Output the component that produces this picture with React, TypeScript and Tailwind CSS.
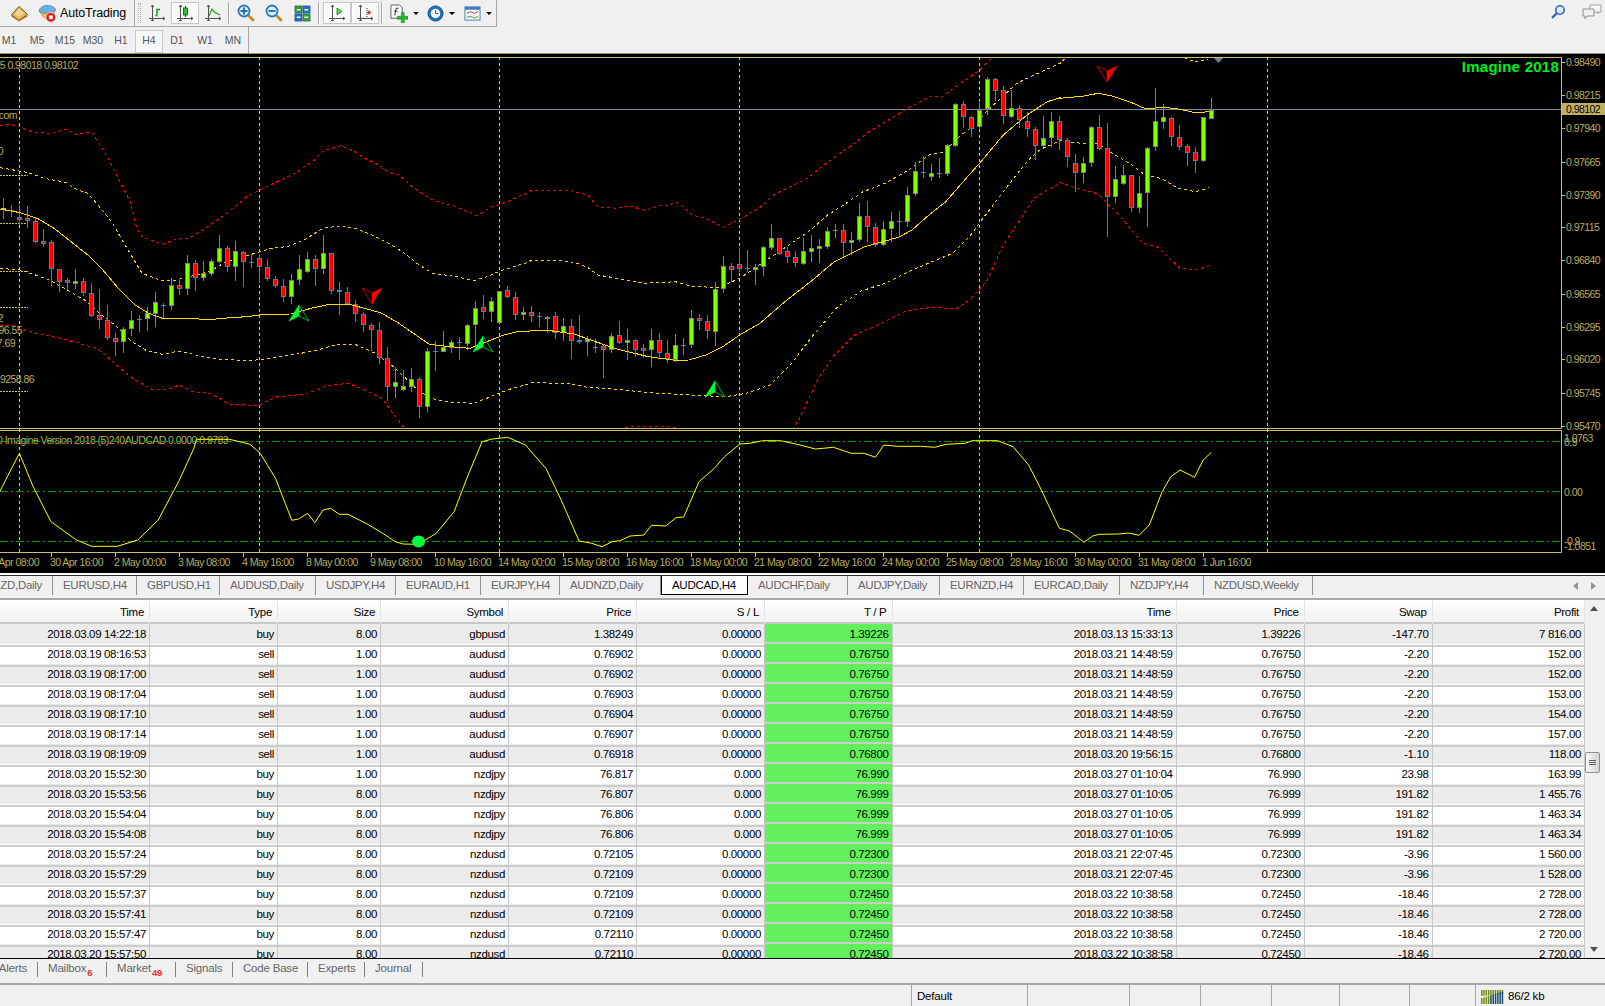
const SANS = "font-['Liberation_Sans',Arial,sans-serif]";

// [high, body top, body bottom, low, 1 = bull / 0 = bear / 2 = plain line]
// numbers are y read off the chart at 3x, first array from x 0, last array has another y origin
const BARS: number[][] = [
  [430,460,464,492,2],[450,464,468,487,0],[450,487,494,510,0],[453,490,499,520,0],[490,499,560,563,0],
  [522,559,566,575,0],[556,562,643,692,0],[643,643,680,710,0],[670,674,685,705,0],[643,679,686,702,1],
  [670,679,715,722,0],[685,715,782,785,0],[702,781,796,822,0],[750,796,848,855,0],[835,848,862,902,0],
  [815,823,862,893,1],[768,796,823,843,1],[780,793,795,830,1],[757,775,793,827,1],[712,742,776,815,1],
  [745,750,754,790,0],[670,691,754,765,1],[672,691,703,720,0],[601,625,703,720,1],[615,625,670,708,0],
  [618,655,670,677,1],[613,619,658,662,1],[541,580,620,625,1],[573,580,637,650,0],[558,589,637,678,1],
  [587,590,622,695,0],[597,621,624,638,0],[597,610,635,683,0],[612,637,673,678,0],[663,673,692,698,0],
  [672,692,725,740,0],[657,676,725,746,1],[601,643,676,690,1],[591,613,650,655,1],[600,613,643,692,0],
  [541,595,643,656,1],[595,595,707,716,0],[682,706,712,780,0],[697,712,746,750,0],[736,748,778,800,0],
  [772,778,811,830,0],[804,811,826,888,0],[802,826,910,926,0],[877,910,997,1038,0],[937,980,997,1028,1],
  [945,994,1006,1008,1],[939,973,995,1010,1],[965,973,1055,1090,0],[880,889,1055,1070,1],[858,888,892,948,0],
  [828,875,892,890,1],[855,862,880,893,1],[845,862,865,915,0],[808,811,866,885,1],[738,760,811,875,1],
  [720,757,772,792,0],[727,737,772,800,1],[707,707,805,805,1],[693,706,725,730,0],[712,725,781,795,0],
  [755,772,781,795,1],[753,772,784,800,0],[770,784,786,815,0],[783,787,791,833,1],[770,784,835,851,0],
  [790,814,835,857,1],[793,814,859,911,0],[780,856,862,868,0],[843,852,862,902,1],[853,875,880,893,1],
  [870,873,886,968,0],[835,842,886,893,1],[798,841,865,868,0],[822,854,865,915,1],[853,856,886,905,0],
  [867,880,889,910,0],[823,856,886,935,1],[835,856,895,913,0],[855,895,912,923,0],[838,871,915,920,1],
  [850,871,874,900,0],[765,790,869,880,1],[777,790,799,825,0],[780,799,829,851,0],[682,703,830,872,1],
  [603,634,703,715,1],[625,634,646,682,0],[580,628,641,652,0],[585,640,643,652,0],[628,637,646,690,1],
  [572,577,637,662,1],[507,550,578,585,1],[550,550,598,600,0],[576,589,607,624,0],[588,607,625,635,0],
  [549,589,626,630,1],[541,580,590,622,1],[553,574,581,624,1],[515,529,576,582,1],[507,525,527,549,1],
  [507,526,563,610,0],[530,556,563,600,1],[445,484,556,560,1],[438,484,517,560,0],[505,515,569,575,0],
  [498,523,569,572,1],[472,499,523,560,1],[468,498,500,545,1],[396,421,500,515,1],[322,349,418,422,1],
  [303,350,353,368,0],[327,355,365,377,1],[310,354,356,368,1],[268,271,357,363,1],[145,148,272,276,1],
  [138,148,187,218,0],[182,187,223,245,0],[145,164,215,225,1],[67,72,163,180,1],[70,72,109,137,0],
  [93,106,184,207,0],[105,160,185,190,1],[150,160,196,218,0],[170,199,223,245,0],[215,223,272,315,0],
  [183,248,272,277,1],[172,199,248,277,1],[183,199,255,285,0],
];
const BARS_TOP: number[][] = [
  [415,420,470,500,0],[462,490,520,575,0],[470,490,520,548,1],[378,380,490,500,1],[345,380,447,450,0],
  [370,445,590,710,0],[498,538,590,608,1],[495,526,553,555,1],[525,526,625,635,0],[528,580,625,638,1],
  [442,444,580,680,1],[265,364,442,452,1],[312,351,365,387,1],[352,355,412,438,0],[375,412,440,450,0],
  [433,439,458,497,0],[441,457,482,518,0],[350,352,484,485,1],[294,330,356,358,1],
];

const L = (z: number[]) => z.reduce<string[]>((a, v, i) => (i % 2 ? a : [...a, `${(v / 2.958).toFixed(1)},${(55 + z[i + 1] / 3).toFixed(1)}`]), []);
const M = (z: number[]) => z.reduce<string[]>((a, v, i) => (i % 2 ? a : [...a, `${(530 + v / 2.958).toFixed(1)},${(55 + z[i + 1] / 3).toFixed(1)}`]), []);
const R = (z: number[]) => z.reduce<string[]>((a, v, i) => (i % 2 ? a : [...a, `${(1060 + v / 2.877).toFixed(1)},${(z[i + 1] / 3).toFixed(1)}`]), []);

const red1 = [...L([0,212,30,208,60,216,100,232,155,235,195,222,225,238,270,230,290,260,320,310,350,370,385,440,405,520,420,545,480,568,520,553,560,550,600,525,650,490,690,460,730,425,770,405,830,375,880,350,930,315,955,288,1010,272,1050,290,1080,310,1110,325,1150,352,1180,360,1220,395,1270,430,1300,442,1350,455,1410,482,1450,458,1500,440,1568,410]),
  ...M([0,407,125,408,170,420,200,455,260,460,290,452,340,466,380,452,410,452,430,440,460,460,480,480,520,490,572,517,620,492,680,458,720,420,770,395,820,370,870,330,910,300,960,265,1000,232,1060,195,1110,165,1120,158,1190,122,1215,128,1260,95,1330,45,1365,10,1400,-20])];
const yel1 = [...L([0,338,40,345,85,353,130,370,195,382,225,403,260,415,290,450,330,500,370,570,400,620,420,655,480,678,520,675,560,665,620,650,660,625,720,605,770,590,810,578,850,575,900,555,955,520,1010,512,1050,520,1100,540,1150,565,1190,590,1240,630,1280,655,1350,665,1400,677,1440,665,1480,648,1520,635,1568,620]),
  ...M([0,617,90,617,150,628,175,640,200,660,270,672,340,685,430,680,480,695,560,697,620,670,700,615,780,560,830,525,880,480,920,455,985,410,1050,385,1120,345,1180,300,1225,290,1270,245,1320,205,1350,170,1440,85,1470,70,1568,25]),
  ...R([0,185,20,175,50,155,330,155,365,178,395,185,425,178])];
const mid = [...L([0,462,60,473,110,490,160,520,210,560,260,600,300,640,350,700,400,750,440,775,480,790,560,790,600,793,630,793,680,788,730,785,780,778,860,777,920,760,975,748,1040,750,1090,763,1130,775,1180,805,1230,840,1270,868,1330,875,1390,880,1440,860,1490,840,1530,830,1568,828]),
  ...M([0,828,60,827,130,837,180,855,250,880,350,905,430,916,470,915,520,900,570,875,620,840,680,805,760,735,830,680,900,620,990,575,1090,547,1130,525,1180,480,1230,440,1290,370,1330,325,1400,240,1470,180,1530,140,1568,128]),
  ...R([0,295,70,288,110,280,150,288,200,305,245,326,300,322,340,327,390,338,430,335])];
const yel2 = [...L([0,640,60,645,90,655,140,672,190,700,250,735,300,780,340,810,390,860,430,885,480,898,530,888,600,905,650,913,740,917,800,910,880,897,940,885,1000,868,1050,868,1110,895,1170,940,1240,1010,1290,1035,1340,1042,1400,1045,1440,1030,1500,1005,1568,985]),
  ...M([0,983,110,985,170,997,260,1003,340,1012,470,1020,580,1025,640,1015,710,990,770,930,830,850,910,755,980,708,1050,685,1130,645,1250,595,1300,545,1340,490,1400,410,1450,345,1480,310,1510,283,1568,258]),
  ...R([0,422,60,430,110,432,150,460,200,490,245,525,290,535,340,565,390,575,430,563])];
const red2a = L([0,810,40,812,80,828,130,840,180,850,240,867,290,882,350,935,400,975,450,1003,490,1005,530,990,570,1010,620,1015,680,1047,760,1052,820,1025,900,1018,970,992,1030,985,1080,1005,1130,1030,1200,1125]);
const red2b = M([280,1117,370,1113,440,1117]);
const red2c = [...M([775,1125,800,1085,850,975,900,900,960,840,1040,805,1115,767,1190,757,1260,762,1300,735,1350,680,1400,570,1440,510,1490,430,1530,405,1568,385]),
  ...R([0,548,50,565,110,582,135,610,175,650,220,710,240,730,280,740,330,790,345,805,395,810,430,796])];

const P5 = (z: number[]) => z.reduce<string[]>((a, v, i) => (i % 2 ? a : [...a, `${(v / 1.96).toFixed(1)},${(425 + z[i + 1] / 3).toFixed(1)}`]), []);
const P6 = (z: number[]) => z.reduce<string[]>((a, v, i) => (i % 2 ? a : [...a, `${(800 + v / 1.947).toFixed(1)},${(425 + z[i + 1] / 3).toFixed(1)}`]), []);
const osc = [...P5([0,198,38,85,65,185,100,290,150,345,180,364,230,364,270,345,310,285,350,170,380,70,385,43,450,43,490,58,510,85,540,160,572,286,585,282,603,265,617,293,633,255,648,250,665,268,682,268,720,297,750,325,775,350,790,357,820,358,855,325,890,260,915,160,945,50,965,42,995,37,1030,60,1070,130,1100,225,1135,348,1160,355,1180,365,1200,350,1215,347,1235,333,1262,330,1277,301,1305,303,1325,278,1340,276,1370,170,1385,150,1400,130,1420,95,1450,57,1470,55,1495,47,1530,47,1568,60]),
  ...P6([30,72,65,67,100,85,125,85,147,97,163,60,190,64,235,64,262,67,285,58,322,55,335,47,385,47,415,65,445,120,470,195,505,310,525,318,553,352,570,333,582,328,620,327,640,324,660,331,680,300,705,200,722,155,740,135,768,157,785,105,801,82])];

const PRICES: [string, number][] = [["0.98490",62],["0.98215",95],["0.97940",128],["0.97665",162],["0.97390",195],["0.97115",227],["0.96840",260],["0.96565",294],["0.96295",327],["0.96020",359],["0.95745",393],["0.95470",426]];
const TIMES = ["27 Apr 08:00","30 Apr 16:00","2 May 00:00","3 May 08:00","4 May 16:00","8 May 00:00","9 May 08:00","10 May 16:00","14 May 00:00","15 May 08:00","16 May 16:00","18 May 00:00","21 May 08:00","22 May 16:00","24 May 00:00","25 May 08:00","28 May 16:00","30 May 00:00","31 May 08:00","1 Jun 16:00"];
const GRID = [19, 259, 499, 739, 979, 1267];

function Candle({ k, bar, base }: { k: number; bar: number[]; base: number }) {
  const x = 3 + 8 * k;
  const [hi, top, bot, lo, kind] = bar.map((v, i) => (i < 4 ? Math.round((v + base) / 3) + 55 : v));
  const edge = kind === 2 ? "#00c000" : kind === 1 ? "#808080" : "#4682b4";
  const fill = kind === 1 ? "#7fff00" : "#ff0000";
  const h = Math.max(1, bot - top);
  return (
    <g>
      <rect x={x} y={hi} width={1} height={lo - hi} fill={edge} />
      <rect x={x - 2} y={top} width={5} height={h} fill={kind === 2 ? "#c8c070" : edge} />
      {h > 2 && <rect x={x - 1} y={top + 1} width={3} height={h - 2} fill={fill} />}
    </g>
  );
}

function UpArrow({ x, y }: { x: number; y: number }) {
  return (
    <g>
      <polygon points={`${x},${y} ${x - 10},${y + 16} ${x},${y + 11}`} fill="#00ff33" stroke="#00ff33" strokeWidth={0.6} />
      <polyline points={`${x},${y} ${x + 10},${y + 16} ${x},${y + 11}`} fill="none" stroke="#00b020" strokeWidth={1} />
    </g>
  );
}

function DownArrow({ x, y }: { x: number; y: number }) {
  return (
    <g>
      <polygon points={`${x},${y} ${x + 10},${y - 16} ${x},${y - 11}`} fill="#ff0000" stroke="#ff0000" strokeWidth={0.6} />
      <polyline points={`${x},${y} ${x - 10},${y - 16} ${x},${y - 11}`} fill="none" stroke="#c00000" strokeWidth={1} />
    </g>
  );
}

function Chart() {
  const gold = "#b8ad62";
  const frame = "#c8c070";
  return (
    <svg viewBox="0 54 1605 519" className={`block h-[519px] w-[1605px] bg-black ${SANS}`}>
      <defs>
        <clipPath id="main"><rect x="0" y="58" width="1561" height="370" /></clipPath>
      </defs>
      {GRID.map((x) => (
        <line key={x} x1={x + 0.5} x2={x + 0.5} y1="57" y2="552" stroke="#d8d080" strokeDasharray="3 3" />
      ))}
      <line x1="0" x2="1561" y1="109.5" y2="109.5" stroke="#7f8c9a" />
      <g clipPath="url(#main)" shapeRendering="crispEdges">
        {[175.5, 223.5, 271.5, 307.5, 391.5].map((y) => (
          <line key={y} x1="0" x2="28" y1={y} y2={y} stroke={frame} strokeDasharray="2 1" />
        ))}
        <polyline points={red1.join(" ")} fill="none" stroke="#ff0000" strokeDasharray="3 3" />
        <polyline points={yel1.join(" ")} fill="none" stroke="#ffd700" strokeDasharray="3 3" />
        <polyline points={yel2.join(" ")} fill="none" stroke="#ffd700" strokeDasharray="3 3" />
        <polyline points={red2a.join(" ")} fill="none" stroke="#ff0000" strokeDasharray="3 3" />
        <polyline points={red2b.join(" ")} fill="none" stroke="#ff0000" strokeDasharray="3 3" />
        <polyline points={red2c.join(" ")} fill="none" stroke="#ff0000" strokeDasharray="3 3" />
        {BARS.map((b, i) => <Candle key={i} k={i} bar={b} base={0} />)}
        {BARS_TOP.map((b, i) => <Candle key={i} k={133 + i} bar={b} base={-165} />)}
        <polyline points={mid.join(" ")} fill="none" stroke="#ffd700" />
      </g>
      <UpArrow x={299} y={305} />
      <UpArrow x={483} y={336} />
      <UpArrow x={715} y={381} />
      <DownArrow x={372} y={304} />
      <DownArrow x={1107} y={82} />
      <polygon points="1214,58 1223,58 1218.5,63" fill="#708090" />

      {/* main window frame */}
      <path d="M0 57.5H1561.5V428.5H0M0 430.5H1561.5V552.5H0M1561.5 430.5V552.5" fill="none" stroke={frame} />

      {/* left edge leftovers of other indicators */}
      <g fontSize="10.5" letterSpacing="-0.55" fill={gold}>
        <text x="78" y="69" textAnchor="end">95 0.98018 0.98102</text>
        <text x="17" y="119" textAnchor="end">.com</text>
        <text x="3" y="155" textAnchor="end">0</text>
        <text x="3" y="322" textAnchor="end">2</text>
        <text x="22" y="334" textAnchor="end">96.55</text>
        <text x="15" y="347" textAnchor="end">7.69</text>
        <text x="34" y="383" textAnchor="end">9258.86</text>
        <text x="-3" y="444">0 Imagine Version 2018 (5)240AUDCAD 0.0000 0.9783</text>
      </g>
      <text x="1559" y="72" textAnchor="end" fontSize="15" fontWeight="700" letterSpacing="0.25" fill="#00ee22">Imagine 2018</text>

      {/* price axis */}
      <g fontSize="10.5" letterSpacing="-0.55" fill={gold}>
        {PRICES.map(([t, y]) => (
          <g key={t}>
            <line x1="1561" x2="1565" y1={y + 0.5} y2={y + 0.5} stroke={frame} />
            <text x="1566" y={y + 4}>{t}</text>
          </g>
        ))}
      </g>
      <rect x="1562" y="103" width="43" height="12" fill="#c0b060" />
      <text x="1566" y="113" fontSize="10.5" letterSpacing="-0.55" fill="#000">0.98102</text>

      {/* oscillator */}
      {[441.5, 491.5, 541.5].map((y) => (
        <line key={y} x1="0" x2="1561" y1={y} y2={y} stroke="#00a000" strokeDasharray="8 3 2 3" />
      ))}
      <polyline points={osc.join(" ")} fill="none" stroke="#ffff00" />
      <ellipse cx="418.5" cy="541.5" rx="6.5" ry="6" fill="#00ff40" />
      <g fontSize="10.5" letterSpacing="-0.55" fill={gold}>
        <text x="1564" y="442">1.0763</text>
        <text x="1564" y="446">0.9</text>
        <text x="1564" y="496">0.00</text>
        <text x="1564" y="545">-0.9</text>
        <text x="1564" y="550">-1.0851</text>
      </g>

      {/* time axis */}
      <g fontSize="10.5" letterSpacing="-0.55" fill={gold}>
        {TIMES.map((t, i) => (
          <g key={t}>
            <line x1={-13 + 64 * i + 0.5} x2={-13 + 64 * i + 0.5} y1="552" y2="557" stroke={frame} />
            <text x={-14 + 64 * i} y="565.5">{t}</text>
          </g>
        ))}
      </g>
    </svg>
  );
}

function Axes({ children }: { children?: React.ReactNode }) {
  return (
    <svg viewBox="0 0 18 18" className="h-[18px] w-[18px]">
      <path d="M4.5 1V17M1 14.5H17M3 3L4.5 1L6 3M15 13L17 14.5L15 16M3 16.5H6" fill="none" stroke="#505050" />
      {children}
    </svg>
  );
}

function ToolBtn({ children, active }: { children: React.ReactNode; active?: boolean }) {
  return (
    <div className={`flex h-[22px] w-[28px] items-center justify-center ${active ? "border border-[#c8c8c8] bg-[#f8f8f8] [box-shadow:inset_1px_1px_0_#fff]" : ""}`}>
      {children}
    </div>
  );
}

const Sep = ({ gap }: { gap: string }) => <div className={`h-[22px] w-[2px] shrink-0 border-l border-[#a8a8a8] bg-white/70 ${gap}`} />;
const Caret = () => <div className="ml-[1px] h-0 w-0 border-x-[3px] border-t-[3px] border-x-transparent border-t-black" />;

function Magnifier({ minus }: { minus?: boolean }) {
  return (
    <svg viewBox="0 0 18 18" className="h-[18px] w-[18px]">
      <path d="M10.5 10.5L16 16" stroke="#c09030" strokeWidth="3" strokeLinecap="round" />
      <circle cx="7" cy="7" r="5.5" fill="#d8eefa" stroke="#2a78c0" strokeWidth="1.8" />
      <path d={minus ? "M3.5 7H10.5" : "M3.5 7H10.5M7 3.5V10.5"} stroke="#1a6ab0" strokeWidth="1.8" />
    </svg>
  );
}

function Toolbars() {
  const tfs = ["M1", "M5", "M15", "M30", "H1", "H4", "D1", "W1", "MN"];
  return (
    <div className={`relative h-[54px] w-full shrink-0 border-b border-[#909090] bg-[#f0f0f0] ${SANS}`}>
      <div className="flex h-[27px] w-[497px] items-center border-r border-b border-[#a8a8a8]">
        <div className="flex h-full w-[135px] items-center border-r border-[#a8a8a8] pl-[11px]">
          <svg viewBox="0 0 17 17" className="h-[17px] w-[17px]">
            <path d="M8 1.5L0.5 10L8 15.5L16.5 9.5Z" fill="#e8b858" stroke="#6e4c14" />
            <path d="M8 3.5L3.5 9L8 12L13 8.5Z" fill="#f4d48e" />
            <path d="M0.5 10L8 15.5L16.5 9.5V11.5L8 16.5L0.5 11.5Z" fill="#a87424" />
          </svg>
          <svg viewBox="0 0 20 20" className="ml-[10px] h-[19px] w-[19px]">
            <path d="M2 8C4 13 8 17 12 17L17 10L18 6Z" fill="#f0c040" stroke="#b08020" strokeWidth="0.5" />
            <path d="M1 8C1 4 6 1 11 1.5C16 2 19 4.5 18.5 7C15 10 5 11 1 8Z" fill="#6cb0e0" stroke="#3a78a8" strokeWidth="0.6" />
            <circle cx="13.5" cy="14" r="5.2" fill="#e01818" stroke="#fff" strokeWidth="0.8" />
            <rect x="11.5" y="12" width="4" height="4" fill="#fff" />
          </svg>
          <span className="ml-[3px] text-[12.5px] tracking-[-0.15px] text-black">AutoTrading</span>
        </div>
        <div className="ml-[3px] h-[20px] w-[3px] border-x border-dotted border-[#b0b0b0]" />
        <div className="ml-[2px] flex items-center">
          <ToolBtn>
            <Axes><path d="M9 11.5V5.5H12M7.5 11.5H9" fill="none" stroke="#00a000" strokeWidth="1.4" /></Axes>
          </ToolBtn>
          <ToolBtn active>
            <Axes>
              <path d="M9.5 2V13" stroke="#404040" />
              <rect x="7.5" y="4" width="4" height="7" fill="#30c030" stroke="#006000" strokeWidth="0.8" />
            </Axes>
          </ToolBtn>
          <ToolBtn>
            <Axes><path d="M5 12L8 5L11 8.5L16 11" fill="none" stroke="#20a020" strokeWidth="1.2" /></Axes>
          </ToolBtn>
        </div>
        <Sep gap="ml-[1px] mr-[2px]" />
        <div className="flex items-center">
          <ToolBtn><Magnifier /></ToolBtn>
          <ToolBtn><Magnifier minus /></ToolBtn>
          <ToolBtn>
            <svg viewBox="0 0 18 18" className="h-[17px] w-[17px]">
              <rect x="1" y="1" width="7.5" height="7.5" fill="#30a040" stroke="#106020" strokeWidth="0.6" />
              <rect x="9.5" y="1" width="7.5" height="7.5" fill="#2a70d0" stroke="#103a80" strokeWidth="0.6" />
              <rect x="1" y="9.5" width="7.5" height="7.5" fill="#2a70d0" stroke="#103a80" strokeWidth="0.6" />
              <rect x="9.5" y="9.5" width="7.5" height="7.5" fill="#30a040" stroke="#106020" strokeWidth="0.6" />
              <path d="M3 5H7M11 5H15M3 13H7M11 13H15" stroke="#fff" strokeWidth="1.6" />
            </svg>
          </ToolBtn>
        </div>
        <Sep gap="ml-[2px] mr-[3px]" />
        <div className="flex items-center">
          <ToolBtn active><Axes><path d="M9 4V11L14 7.5Z" fill="#60d060" stroke="#108010" strokeWidth="0.8" /></Axes></ToolBtn>
          <ToolBtn active><Axes><path d="M11 4V13" stroke="#303090" strokeDasharray="1 1" /><path d="M11 8.5H15M13 6.5V10.5" stroke="#d02020" strokeWidth="1.3" /></Axes></ToolBtn>
        </div>
        <Sep gap="ml-[2px] mr-[1px]" />
        <div className="flex items-center">
          <div className="flex w-[28px] items-center justify-center">
            <svg viewBox="0 0 20 20" className="h-[19px] w-[19px]">
              <path d="M2 1H11L14 4V15H2Z" fill="#f8f8f8" stroke="#606060" />
              <path d="M6 12L7.5 4.5H10M5.5 7.5H9" fill="none" stroke="#303030" />
              <path d="M13 9V13H9V16H13V20H16V16H20V13H16V9Z" fill="#20c030" stroke="#108018" strokeWidth="0.6" />
            </svg>
          </div>
          <Caret />
          <div className="ml-[3px] flex w-[26px] items-center justify-center">
            <svg viewBox="0 0 18 18" className="h-[17px] w-[17px]">
              <circle cx="9" cy="9" r="8" fill="#1f70c0" stroke="#0e4a88" />
              <circle cx="9" cy="9" r="5" fill="#f4f8fc" />
              <path d="M9 5.5V9H12" fill="none" stroke="#404040" />
            </svg>
          </div>
          <Caret />
          <div className="ml-[4px] flex w-[26px] items-center justify-center">
            <svg viewBox="0 0 18 18" className="h-[17px] w-[17px]">
              <rect x="1" y="2" width="16" height="14" fill="#f4f4f4" stroke="#5080b0" />
              <rect x="1" y="2" width="16" height="3" fill="#3a80c8" />
              <path d="M3 9L7 7L11 9L15 7" fill="none" stroke="#c04020" />
              <path d="M3 13L7 12L11 14L15 12" fill="none" stroke="#30a030" />
            </svg>
          </div>
          <Caret />
        </div>
      </div>
      <div className="flex h-[26px] w-[249px] items-center overflow-hidden border-r border-[#a8a8a8] pt-[2px]">
        <div className="-ml-[5px] flex">
          {tfs.map((t) => (
            <div key={t} className={`flex h-[23px] w-[28px] shrink-0 items-center justify-center text-[10.5px] text-[#555] ${t === "H4" ? "border border-[#c8c8c8] bg-[#f8f8f8]" : ""}`}>
              {t}
            </div>
          ))}
        </div>
      </div>
      <div className="absolute top-[4px] right-[2px] flex items-center gap-[15px]">
        <svg viewBox="0 0 16 16" className="h-[16px] w-[16px]">
          <circle cx="10" cy="6" r="4.2" fill="#dcecf8" stroke="#2a68c0" strokeWidth="1.6" />
          <path d="M7 9L2 14" stroke="#2a68c0" strokeWidth="2.4" />
        </svg>
        <svg viewBox="0 0 22 16" className="h-[16px] w-[22px]">
          <path d="M9 1H20V8H18L17 10V8H9Z" fill="#f8f8f8" stroke="#a0a0a0" />
          <path d="M2 5H13V12H6L4 15V12H2Z" fill="#f0f0f0" stroke="#909090" />
        </svg>
      </div>
    </div>
  );
}

const SYMBOL_TABS: [string, string][] = [
  ["AUDNZD,Daily", "w-[53px]"], ["EURUSD,H4", "w-[84px]"], ["GBPUSD,H1", "w-[83px]"], ["AUDUSD,Daily", "w-[96px]"],
  ["USDJPY,H4", "w-[80px]"], ["EURAUD,H1", "w-[85px]"], ["EURJPY,H4", "w-[79px]"], ["AUDNZD,Daily", "w-[101px]"],
  ["AUDCAD,H4", "w-[87px]"], ["AUDCHF,Daily", "w-[100px]"], ["AUDJPY,Daily", "w-[92px]"], ["EURNZD,H4", "w-[84px]"],
  ["EURCAD,Daily", "w-[96px]"], ["NZDJPY,H4", "w-[84px]"], ["NZDUSD,Weekly", "w-[109px]"],
];

function SymbolTabs() {
  return (
    <div className={`relative h-[27px] shrink-0 border-t-2 border-b-2 border-t-white border-b-[#a8a8a8] bg-[#f0f0f0] ${SANS}`}>
      <div className="box-content flex h-[19px] border-t border-[#303030]">
        {SYMBOL_TABS.map(([name, w], i) => {
          const active = name === "AUDCAD,H4";
          return (
            <div
              key={i}
              className={`flex h-[19px] shrink-0 items-center overflow-hidden whitespace-nowrap pt-[1px] text-[11.5px] tracking-[-0.3px] ${w} ${
                i === 0 ? "justify-end pr-[10px]" : "pl-[10px]"
              } ${active ? "border-x border-b border-black bg-white text-black" : "border-r border-[#909090] text-[#666]"}`}
            >
              {name}
            </div>
          );
        })}
      </div>
      <div className="absolute top-[7px] right-[9px] flex gap-[13px]">
        <svg viewBox="0 0 5 8" className="h-[8px] w-[5px]"><path d="M5 0V8L0 4Z" fill="#909090" /></svg>
        <svg viewBox="0 0 5 8" className="h-[8px] w-[5px]"><path d="M0 0V8L5 4Z" fill="#909090" /></svg>
      </div>
    </div>
  );
}

const COLS = "grid grid-cols-[150px_128px_103px_128px_128px_128px_127.5px_284px_128px_128px_152.5px]";
const HEAD = ["Time", "Type", "Size", "Symbol", "Price", "S / L", "T / P", "Time", "Price", "Swap", "Profit"];
const D1 = "2018.03.21 14:48:59";
const D2 = "2018.03.27 01:10:05";
const D3 = "2018.03.22 10:38:58";
const ROWS: string[][] = [
  ["2018.03.09 14:22:18","buy","8.00","gbpusd","1.38249","0.00000","1.39226","2018.03.13 15:33:13","1.39226","-147.70","7 816.00"],
  ["2018.03.19 08:16:53","sell","1.00","audusd","0.76902","0.00000","0.76750",D1,"0.76750","-2.20","152.00"],
  ["2018.03.19 08:17:00","sell","1.00","audusd","0.76902","0.00000","0.76750",D1,"0.76750","-2.20","152.00"],
  ["2018.03.19 08:17:04","sell","1.00","audusd","0.76903","0.00000","0.76750",D1,"0.76750","-2.20","153.00"],
  ["2018.03.19 08:17:10","sell","1.00","audusd","0.76904","0.00000","0.76750",D1,"0.76750","-2.20","154.00"],
  ["2018.03.19 08:17:14","sell","1.00","audusd","0.76907","0.00000","0.76750",D1,"0.76750","-2.20","157.00"],
  ["2018.03.19 08:19:09","sell","1.00","audusd","0.76918","0.00000","0.76800","2018.03.20 19:56:15","0.76800","-1.10","118.00"],
  ["2018.03.20 15:52:30","buy","1.00","nzdjpy","76.817","0.000","76.990","2018.03.27 01:10:04","76.990","23.98","163.99"],
  ["2018.03.20 15:53:56","buy","8.00","nzdjpy","76.807","0.000","76.999",D2,"76.999","191.82","1 455.76"],
  ["2018.03.20 15:54:04","buy","8.00","nzdjpy","76.806","0.000","76.999",D2,"76.999","191.82","1 463.34"],
  ["2018.03.20 15:54:08","buy","8.00","nzdjpy","76.806","0.000","76.999",D2,"76.999","191.82","1 463.34"],
  ["2018.03.20 15:57:24","buy","8.00","nzdusd","0.72105","0.00000","0.72300","2018.03.21 22:07:45","0.72300","-3.96","1 560.00"],
  ["2018.03.20 15:57:29","buy","8.00","nzdusd","0.72109","0.00000","0.72300","2018.03.21 22:07:45","0.72300","-3.96","1 528.00"],
  ["2018.03.20 15:57:37","buy","8.00","nzdusd","0.72109","0.00000","0.72450",D3,"0.72450","-18.46","2 728.00"],
  ["2018.03.20 15:57:41","buy","8.00","nzdusd","0.72109","0.00000","0.72450",D3,"0.72450","-18.46","2 728.00"],
  ["2018.03.20 15:57:47","buy","8.00","nzdusd","0.72110","0.00000","0.72450",D3,"0.72450","-18.46","2 720.00"],
  ["2018.03.20 15:57:50","buy","8.00","nzdusd","0.72110","0.00000","0.72450",D3,"0.72450","-18.46","2 720.00"],
];

function Trades() {
  return (
    <div className={`flex h-[359px] shrink-0 border-b border-black ${SANS}`}>
      <div className="w-[1585px] overflow-hidden">
        <div className={`${COLS} h-[24px] border-b-2 border-[#c8c8c8] bg-gradient-to-b from-white to-[#f0f0f0]`}>
          {HEAD.map((h, i) => (
            <div key={i} className="border-r border-[#e4e4e4] pr-[5px] text-right text-[11.5px] leading-[24px] tracking-[-0.3px] text-black">{h}</div>
          ))}
        </div>
        {ROWS.map((r, i) => (
          <div key={i} className={`${COLS} h-[20px] ${i % 2 ? "bg-white" : "bg-[#ebebeb]"}`}>
            {r.map((c, j) =>
              j === 6 ? (
                <div key={j} className="h-[20px] border-r border-r-[#c8c8c8] text-right text-[11.5px] leading-[21px] tracking-[-0.35px] text-black">
                  <div className="h-[18px] bg-[#62f05c] pr-[3px]">{c}</div>
                  <div className="h-[2px] bg-[#cccccc]" />
                </div>
              ) : (
                <div key={j} className="border-r border-b-2 border-r-[#c8c8c8] border-b-[#cccccc] pr-[3px] text-right text-[11.5px] leading-[21px] tracking-[-0.35px] text-black">{c}</div>
              ),
            )}
          </div>
        ))}
      </div>
      <div className="flex w-[20px] flex-col items-start bg-[#f0f0f0] pt-[6px] pb-[6px]">
        <svg viewBox="0 0 8 5" className="ml-[5px] h-[5px] w-[8px]"><path d="M0 5H8L4 0Z" fill="#505050" /></svg>
        <div className="mt-[141px] flex h-[21px] w-[15px] flex-col items-center justify-center gap-[1px] rounded-[2px] border border-[#909090] bg-gradient-to-r from-[#f8f8f8] to-[#d4d4d4]">
          <div className="h-[1px] w-[7px] bg-[#606060]" />
          <div className="h-[1px] w-[7px] bg-[#606060]" />
          <div className="h-[1px] w-[7px] bg-[#606060]" />
        </div>
        <svg viewBox="0 0 8 5" className="mt-auto ml-[5px] h-[5px] w-[8px]"><path d="M0 0H8L4 5Z" fill="#505050" /></svg>
      </div>
    </div>
  );
}

const BOTTOM_TABS: { name: string; w: string; sup?: string }[] = [
  { name: "Alerts", w: "w-[38px]" },
  { name: "Mailbox", w: "w-[69px]", sup: "6" },
  { name: "Market", w: "w-[69px]", sup: "49" },
  { name: "Signals", w: "w-[57px]" },
  { name: "Code Base", w: "w-[75px]" },
  { name: "Experts", w: "w-[57px]" },
  { name: "Journal", w: "w-[58px]" },
];

function BottomTabs() {
  return (
    <div className={`flex h-[24px] shrink-0 items-center bg-[#f0f0f0] pb-[4px] ${SANS}`}>
      {BOTTOM_TABS.map((t, i) => (
        <div key={t.name} className={`flex h-[15px] shrink-0 items-center overflow-hidden whitespace-nowrap border-r border-[#808080] text-[11.5px] tracking-[-0.2px] text-[#666] ${t.w} ${i === 0 ? "justify-end pr-[10px]" : "pl-[10px]"}`}>
          {t.name}
          {t.sup && <span className="mt-[9px] ml-[1px] text-[9.5px] font-bold text-[#f03030]">{t.sup}</span>}
        </div>
      ))}
    </div>
  );
}

function StatusBar() {
  const cells = ["w-[912px]", "w-[116px]", "w-[102px]", "w-[71px]", "w-[71px]", "w-[68px]", "w-[70px]", "w-[66px]"];
  const bars = [0, 1, 2, 3, 4, 5, 6, 7, 8, 9];
  return (
    <div className={`flex flex-1 border-t-2 border-t-[#a8a8a8] bg-[#f0f0f0] ${SANS} text-[11.5px] tracking-[-0.2px] text-black`}>
      {cells.map((w, i) => (
        <div key={i} className={`flex items-center border-r border-[#a8a8a8] pt-[2px] pl-[5px] ${w}`}>
          {i === 1 && "Default"}
        </div>
      ))}
      <div className="flex items-center pt-[2px] pl-[5px]">
        <svg viewBox="0 0 23 14" className="h-[14px] w-[23px]">
          {bars.map((b) => (
            <g key={b}>
              <rect x={b * 2.3} y={0} width={1.5} height={6 - b * 0.2} fill="#6f8a10" />
              <rect x={b * 2.3} y={8 - b * 0.7} width={1.5} height={6 + b * 0.7} fill={b > 3 ? "#1c4a70" : "#6f8a10"} />
            </g>
          ))}
        </svg>
        <span className="ml-[4px]">86/2 kb</span>
      </div>
    </div>
  );
}

export default function App() {
  return (
    <div className="flex h-[1006px] w-[1605px] flex-col overflow-hidden bg-[#f0f0f0]">
      <Toolbars />
      <Chart />
      <SymbolTabs />
      <Trades />
      <BottomTabs />
      <StatusBar />
    </div>
  );
}
